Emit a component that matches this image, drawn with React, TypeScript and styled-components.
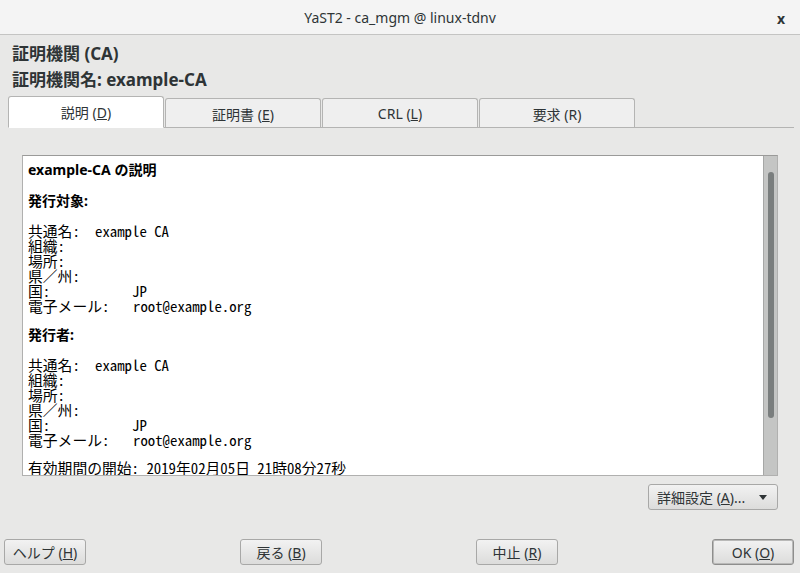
import React from "react"
import styled, { createGlobalStyle } from "styled-components"

const GlobalStyle = createGlobalStyle`
  html, body {
    margin: 0;
    padding: 0;
    background: #e8e8e7;
  }
  body {
    font-family: "Noto Sans", "Noto Sans CJK JP", sans-serif;
    color: #2e3436;
  }
`

const UI_FONT = `"Noto Sans", "Noto Sans CJK JP", sans-serif`
const MONO_FONT = `"Noto Sans Mono CJK JP", "DejaVu Sans Mono", "Noto Sans CJK JP", monospace`

const Style = {
  Window: styled.div`
    width: 800px;
    height: 573px;
    display: flex;
    flex-direction: column;
    background: #e8e8e7;
    overflow: hidden;
  `,
  TitleBar: styled.div`
    height: 34px;
    flex-shrink: 0;
    display: flex;
    align-items: center;
    justify-content: center;
    position: relative;
    background: #f4f4f4;
    border-bottom: 1px solid #c4c4c3;
    font-family: ${UI_FONT};
    font-size: 14px;
    color: #2e3436;
  `,
  CloseButton: styled.span`
    position: absolute;
    right: 15px;
    top: 9px;
    font-size: 14px;
    font-weight: bold;
    color: #2e3436;
  `,
  Body: styled.div`
    flex: 1;
    display: flex;
    flex-direction: column;
    padding: 6px 6px 8px 8px;
  `,
  Heading: styled.div`
    font-family: ${UI_FONT};
    font-size: 17px;
    font-weight: bold;
    line-height: 26px;
    color: #2e3436;
    padding-left: 4px;
  `,
  TabBar: styled.div`
    display: flex;
    align-items: flex-end;
    height: 32px;
    margin-top: 2px;
    border-bottom: 1px solid #b4b4b3;
  `,
  Tab: styled.div<{ $active?: boolean }>`
    width: 156px;
    height: ${(p) => (p.$active ? "32px" : "29px")};
    box-sizing: border-box;
    display: flex;
    align-items: center;
    justify-content: center;
    padding-top: ${(p) => (p.$active ? "0" : "1px")};
    margin-bottom: ${(p) => (p.$active ? "-1px" : "0")};
    background: ${(p) => (p.$active ? "#ffffff" : "#efefef")};
    border: 1px solid #b4b4b3;
    border-bottom: ${(p) => (p.$active ? "1px solid #ffffff" : "none")};
    border-radius: 3px 3px 0 0;
    margin-right: 1px;
    font-family: ${UI_FONT};
    font-size: 14px;
    color: #2e3436;
  `,
  Pane: styled.div`
    flex: 1;
    display: flex;
    flex-direction: column;
    padding: 27px 0 0 14px;
  `,
  ContentBox: styled.div`
    width: 756px;
    height: 321px;
    box-sizing: border-box;
    display: flex;
    background: #ffffff;
    border: 1px solid #b0b0af;
    border-top-color: #9a9a99;
    overflow: hidden;
  `,
  Text: styled.div`
    flex: 1;
    padding: 5px 0 0 5px;
    color: #000000;
  `,
  SectionTitle: styled.div`
    font-family: ${UI_FONT};
    font-size: 14px;
    font-weight: bold;
    line-height: 17px;
    margin-bottom: 14px;
  `,
  InfoBlock: styled.div`
    margin-bottom: 13px;
  `,
  InfoLine: styled.div`
    display: flex;
    font-family: ${MONO_FONT};
    font-size: 14.8px;
    line-height: 15px;
    height: 15px;
    white-space: pre;
  `,
  InfoLabel: styled.span<{ $width: number }>`
    width: ${(p) => p.$width}px;
    flex-shrink: 0;
  `,
  PlainLine: styled.div`
    font-family: ${MONO_FONT};
    font-size: 14.8px;
    line-height: 15px;
    white-space: pre;
  `,
  ScrollTrack: styled.div`
    width: 13px;
    flex-shrink: 0;
    background: #c4c5c4;
    border-left: 1px solid #a6a7a6;
    display: flex;
    flex-direction: column;
    align-items: center;
    padding-top: 16px;
  `,
  ScrollThumb: styled.div`
    width: 6px;
    height: 246px;
    border-radius: 3px;
    background: #7a7e7e;
  `,
  DetailRow: styled.div`
    display: flex;
    justify-content: flex-end;
    width: 756px;
    margin-top: 8px;
  `,
  Button: styled.button<{ $default?: boolean }>`
    height: 26px;
    width: 82px;
    box-sizing: border-box;
    padding: 0;
    text-align: center;
    white-space: nowrap;
    border: 1px solid ${(p) => (p.$default ? "#8e8e8d" : "#a8a8a7")};
    border-radius: 3px;
    background: linear-gradient(#f2f2f2, #dcdcdb);
    box-shadow: ${(p) => (p.$default ? "inset 0 0 0 1px #b9b9b8" : "none")};
    font-family: ${UI_FONT};
    font-size: 14px;
    color: #2e3436;
  `,
  DetailButton: styled.button`
    height: 26px;
    width: 130px;
    box-sizing: border-box;
    padding: 0 8px 0 8px;
    display: flex;
    align-items: center;
    justify-content: space-between;
    border: 1px solid #a8a8a7;
    border-radius: 3px;
    background: linear-gradient(#f2f2f2, #dcdcdb);
    font-family: ${UI_FONT};
    font-size: 14px;
    color: #2e3436;
    white-space: nowrap;
  `,
  Arrow: styled.span`
    width: 0;
    height: 0;
    border-left: 4px solid transparent;
    border-right: 4px solid transparent;
    border-top: 5px solid #2e3436;
    margin-right: 2px;
  `,
  ButtonRow: styled.div`
    margin-top: auto;
    display: flex;
    justify-content: space-between;
    margin-left: -4px;
  `,
}

type Entry = { label: string; value: string; width: number }

const subjectEntries: Entry[] = [
  { label: "共通名:", value: "example CA", width: 67 },
  { label: "組織:", value: "", width: 104 },
  { label: "場所:", value: "", width: 104 },
  { label: "県／州:", value: "", width: 104 },
  { label: "国:", value: "JP", width: 104 },
  { label: "電子メール:", value: "root@example.org", width: 105 },
]

function InfoList({ entries }: { entries: Entry[] }) {
  return (
    <Style.InfoBlock>
      {entries.map((e) => (
        <Style.InfoLine key={e.label}>
          <Style.InfoLabel $width={e.width}>{e.label}</Style.InfoLabel>
          <span>{e.value}</span>
        </Style.InfoLine>
      ))}
    </Style.InfoBlock>
  )
}

export default function App() {
  return (
    <>
      <GlobalStyle />
      <Style.Window>
        <Style.TitleBar>
          YaST2 - ca_mgm @ linux-tdnv
          <Style.CloseButton>x</Style.CloseButton>
        </Style.TitleBar>
        <Style.Body>
          <Style.Heading>証明機関 (CA)</Style.Heading>
          <Style.Heading>証明機関名: example-CA</Style.Heading>
          <Style.TabBar>
            <Style.Tab $active>
              <span>
                説明 (<u>D</u>)
              </span>
            </Style.Tab>
            <Style.Tab>
              <span>
                証明書 (<u>E</u>)
              </span>
            </Style.Tab>
            <Style.Tab>
              <span>
                CRL (<u>L</u>)
              </span>
            </Style.Tab>
            <Style.Tab>
              <span>要求 (R)</span>
            </Style.Tab>
          </Style.TabBar>
          <Style.Pane>
            <Style.ContentBox>
              <Style.Text>
                <Style.SectionTitle>example-CA の説明</Style.SectionTitle>
                <Style.SectionTitle>発行対象:</Style.SectionTitle>
                <InfoList entries={subjectEntries} />
                <Style.SectionTitle>発行者:</Style.SectionTitle>
                <InfoList entries={subjectEntries} />
                <Style.PlainLine>有効期間の開始: 2019年02月05日 21時08分27秒</Style.PlainLine>
              </Style.Text>
              <Style.ScrollTrack>
                <Style.ScrollThumb />
              </Style.ScrollTrack>
            </Style.ContentBox>
            <Style.DetailRow>
              <Style.DetailButton>
                <span>
                  詳細設定 (<u>A</u>)...
                </span>
                <Style.Arrow />
              </Style.DetailButton>
            </Style.DetailRow>
          </Style.Pane>
          <Style.ButtonRow>
            <Style.Button>
              ヘルプ (<u>H</u>)
            </Style.Button>
            <Style.Button>
              戻る (<u>B</u>)
            </Style.Button>
            <Style.Button>
              中止 (<u>R</u>)
            </Style.Button>
            <Style.Button $default>
              OK (<u>O</u>)
            </Style.Button>
          </Style.ButtonRow>
        </Style.Body>
      </Style.Window>
    </>
  )
}
